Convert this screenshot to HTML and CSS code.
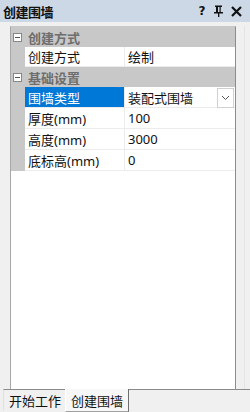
FILE: index.html
```html
<!DOCTYPE html>
<html lang="zh-CN">
<head>
  <meta charset="UTF-8" />
  <title>创建围墙</title>
  <link rel="stylesheet" href="styles.css">
</head>
<body>

  <!-- title bar -->
  <div class="titlebar">
    <span class="title">创建围墙</span>
    <span class="tool tool-q">?</span>
    <span class="tool">
      <svg width="9" height="12" viewBox="0 0 9 12">
        <rect x="1" y="0.5" width="7" height="1.5" fill="#111"/>
        <rect x="2" y="1" width="2" height="6" fill="#111"/>
        <rect x="5.5" y="1" width="1.2" height="6" fill="#111"/>
        <rect x="0" y="7" width="9" height="1.5" fill="#111"/>
        <rect x="4" y="8" width="1.3" height="4" fill="#111"/>
      </svg>
    </span>
    <span class="tool">
      <svg width="11" height="11" viewBox="0 0 11 11">
        <path d="M1 1 L10 10 M10 1 L1 10" stroke="#111" stroke-width="2.2"/>
      </svg>
    </span>
  </div>

  <div class="panel">
    <div class="grid-box">
      <!-- 创建方式 -->
      <div class="cat-row">
        <span class="toggle"></span>
        <span class="cat-name">创建方式</span>
      </div>
      <div class="prop-row">
        <span class="gutter"></span>
        <span class="prop-name">创建方式</span>
        <span class="prop-value">绘制</span>
      </div>

      <!-- 基础设置 -->
      <div class="cat-row">
        <span class="toggle"></span>
        <span class="cat-name">基础设置</span>
      </div>
      <div class="prop-row tall">
        <span class="gutter"></span>
        <span class="prop-name selected">围墙类型</span>
        <span class="prop-value">
          装配式围墙
          <span class="drop-btn">
            <svg width="9" height="6" viewBox="0 0 9 6">
              <path d="M1 1 L4.5 4.5 L8 1" fill="none" stroke="#555" stroke-width="1"/>
            </svg>
          </span>
        </span>
      </div>
      <div class="prop-row tall">
        <span class="gutter"></span>
        <span class="prop-name">厚度(mm)</span>
        <span class="prop-value">100</span>
      </div>
      <div class="prop-row tall">
        <span class="gutter"></span>
        <span class="prop-name">高度(mm)</span>
        <span class="prop-value">3000</span>
      </div>
      <div class="prop-row tall">
        <span class="gutter"></span>
        <span class="prop-name">底标高(mm)</span>
        <span class="prop-value">0</span>
      </div>
    </div>
    <div class="side-track"></div>
  </div>

  <!-- bottom tabs -->
  <div class="tabs">
    <span class="tab">开始工作</span>
    <span class="tab active">创建围墙</span>
    <span class="tab-fill"></span>
  </div>

</body>
</html>
```

FILE: styles.css
```css
body {
  margin: 0;
  width: 250px;
  height: 412px;
  overflow: hidden;
  background-color: #f0f0f0;
  font-family: "Noto Sans", "Noto Sans CJK SC", sans-serif;
  font-size: 13px;
  color: #111;
  display: flex;
  flex-direction: column;
}

.titlebar {
  height: 22px;
  background-color: #cdd8e6;
  display: flex;
  align-items: center;
  padding: 0 0 0 3px;
}

.title {
  flex: 1;
  font-family: "Noto Sans CJK SC", sans-serif;
  font-weight: bold;
  font-size: 13px;
  letter-spacing: -0.5px;
}

.tool {
  flex: none;
  width: 16px;
  display: flex;
  justify-content: center;
  align-items: center;
}

.tool:last-child {
  width: 20px;
  margin-right: 4px;
}

.tool-q {
  font-family: "DejaVu Sans", sans-serif;
  font-weight: bold;
  font-size: 12px;
}

.panel {
  flex: 1;
  display: flex;
  padding: 4px 0 0 10px;
}

.grid-box {
  width: 224px;
  background-color: #fff;
  border-left: 1px solid #a8a8a8;
  border-right: 1px solid #8c8c8c;
  border-top: 1px solid #c8c8c8;
}

.side-track {
  flex: 1;
  border-right: 1px solid #e4e4e4;
  margin-right: 5px;
}

.cat-row {
  height: 20px;
  background-color: #c8c8c8;
  display: flex;
  align-items: center;
}

.toggle {
  width: 7px;
  height: 7px;
  margin: 0 6px 0 2px;
  border: 1px solid #888;
  background: #fff linear-gradient(#555, #555) no-repeat center / 5px 1px;
}

.cat-name {
  font-family: "Noto Sans CJK SC", sans-serif;
  font-weight: bold;
  color: #6e6e6e;
}

.prop-row {
  height: 20px;
  display: grid;
  grid-template-columns: 14px 99px 1fr;
}

.prop-row.tall {
  height: 21px;
}

.gutter {
  background-color: #c8c8c8;
}

.prop-name, .prop-value {
  display: flex;
  align-items: center;
  padding-left: 3px;
  border-bottom: 1px solid #ececec;
  font-family: "Noto Sans", "Noto Sans CJK SC", sans-serif;
  white-space: nowrap;
}

.prop-value {
  border-left: 1px solid #ececec;
  position: relative;
}

.selected {
  background-color: #0078d7;
  color: #fff;
}

.drop-btn {
  position: absolute;
  right: 1px;
  top: 1px;
  width: 15px;
  height: 18px;
  border: 1px solid #d0d0d0;
  background-color: #fff;
  display: flex;
  align-items: center;
  justify-content: center;
}

.tabs {
  height: 23px;
  display: flex;
  font-family: "Noto Sans CJK SC", sans-serif;
}

.tab {
  padding: 0 4px 0 5px;
  margin-left: 3px;
  border-top: 1px solid #8a8a8a;
  border-left: 1px solid #e0e0e0;
  display: flex;
  align-items: center;
  height: 20px;
}

.tab.active {
  margin-left: 0;
  border-top: none;
  border-left: 1px solid #fff;
  border-right: 1px solid #6e6e6e;
  border-bottom: 1px solid #a0a0a0;
  background-color: #f7f7f7;
  height: 21px;
  padding: 1px 5px 0 5px;
}

.tab-fill {
  flex: 1;
  border-top: 1px solid #8a8a8a;
}
```
